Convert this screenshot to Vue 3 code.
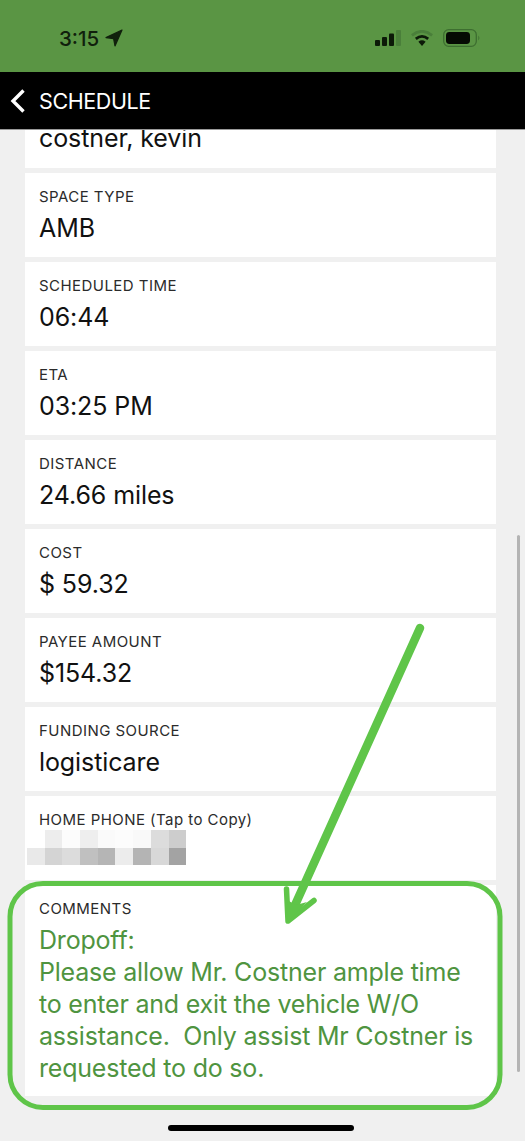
<script setup>
const fields = [
  { label: 'SPACE TYPE', value: 'AMB' },
  { label: 'SCHEDULED TIME', value: '06:44' },
  { label: 'ETA', value: '03:25 PM' },
  { label: 'DISTANCE', value: '24.66 miles' },
  { label: 'COST', value: '$ 59.32' },
  { label: 'PAYEE AMOUNT', value: '$154.32' },
  { label: 'FUNDING SOURCE', value: 'logisticare' }
]

// blurred phone number, one row of grey levels per line of the mosaic
const mosaic = [
  ['#fff', '#ededed', '#fcfcfc', '#eeeeee', '#fafafa', '#fcfcfc', '#f9f9f9', '#dcdcdc', '#cdcdcd'],
  ['#e9e9e9', '#d4d4d4', '#dcdcdc', '#c0c0c0', '#b5b5b5', '#ececec', '#b4b4b4', '#d8d8d8', '#a3a3a3']
]
</script>

<template>
  <div class="screen">
    <div class="status-bar">
      <div class="status-left">
        <span class="time">3:15</span>
        <svg class="loc" width="18" height="18" viewBox="0 0 18 18">
          <path d="M17 1 L1 8.6 L8.6 9.6 L10 17 Z" fill="#10200c" stroke="#10200c" stroke-width="1.2" stroke-linejoin="round" />
        </svg>
      </div>
      <div class="status-right">
        <svg width="26" height="16" viewBox="0 0 26 16">
          <rect x="0" y="10" width="5" height="6" rx="1" fill="#0c1a08" />
          <rect x="7" y="7" width="5" height="9" rx="1" fill="#0c1a08" />
          <rect x="14" y="3.5" width="5" height="12.5" rx="1" fill="#0c1a08" />
          <rect x="21" y="0" width="5" height="16" rx="1" fill="#4a7f3a" />
        </svg>
        <svg width="24" height="17" viewBox="0 0 22 16">
          <path d="M1.5 5 Q11 -2.5 20.5 5" fill="none" stroke="#4a7f3a" stroke-width="2.6" />
          <path d="M5.2 8.4 Q11 3.6 16.8 8.4" fill="none" stroke="#0c1a08" stroke-width="2.6" />
          <path d="M7.6 11 Q11 8.2 14.4 11 L11 15 Z" fill="#0c1a08" />
        </svg>
        <svg width="38" height="18" viewBox="0 0 38 18">
          <rect x="0.7" y="0.7" width="32.6" height="16.6" rx="5" fill="none" stroke="#3d6e30" stroke-width="1.3" />
          <rect x="3" y="3" width="24" height="12" rx="3.4" fill="#050a03" />
          <path d="M35.4 6.5 Q37.4 9 35.4 11.5 Z" fill="#3d6e30" />
        </svg>
      </div>
    </div>

    <div class="nav-bar">
      <svg width="18" height="26" viewBox="0 0 18 26">
        <path d="M14.5 2.5 L4 13 L14.5 23.5" fill="none" stroke="#fff" stroke-width="3.4" />
      </svg>
      <span class="nav-title">SCHEDULE</span>
    </div>

    <div class="content">
      <div class="list">
        <div class="card card-first">
          <div class="value">costner, kevin</div>
        </div>
        <div v-for="f in fields" :key="f.label" class="card">
          <div class="label">{{ f.label }}</div>
          <div class="value">{{ f.value }}</div>
        </div>
        <div class="card">
          <div class="label">HOME PHONE (Tap to Copy)</div>
          <div class="mosaic">
            <div v-for="(row, i) in mosaic" :key="i" class="mosaic-row">
              <span v-for="(c, j) in row" :key="j" :style="{ background: c }"></span>
            </div>
          </div>
        </div>
        <div class="card card-comments">
          <div class="label">COMMENTS</div>
          <div class="comments">Dropoff:<br />Please allow Mr. Costner ample time to enter and exit the vehicle W/O assistance.&nbsp; Only assist Mr Costner is requested to do so.</div>
        </div>
      </div>
    </div>

    <div class="scrollbar"></div>
    <div class="home-indicator"></div>

    <!-- green markup drawn over the screenshot -->
    <svg class="markup" width="525" height="1141" viewBox="0 0 525 1141">
      <rect x="10" y="883.5" width="490" height="224" rx="33" fill="none" stroke="#5fc549" stroke-width="5" />
      <path d="M420 628 L291 914" fill="none" stroke="#5fc549" stroke-width="8.5" stroke-linecap="round" />
      <path d="M286.5 889 L288 921 L314 900.5" fill="none" stroke="#5fc549" stroke-width="5.5" stroke-linecap="round" stroke-linejoin="round" />
      <path d="M288 921 L287 900 L296 905 L307 902 Z" fill="#5fc549" />
    </svg>
  </div>
</template>

<style>
body {
  background: #f0f0f0;
}
</style>

<style scoped>
.screen {
  position: relative;
  width: 525px;
  height: 1141px;
  overflow: hidden;
  background: #f0f0f0;
  font-family: Inter, "Liberation Sans", Arial, sans-serif;
  display: flex;
  flex-direction: column;
}

.status-bar {
  height: 72px;
  flex-shrink: 0;
  background: #5a9544;
  display: flex;
  align-items: center;
  justify-content: space-between;
  padding: 4px 44px 0 59px;
  box-sizing: border-box;
}

.status-left {
  display: flex;
  align-items: center;
  gap: 6px;
}

.time {
  font-size: 20.5px;
  font-weight: 500;
  color: #10200c;
}

.status-right {
  display: flex;
  align-items: center;
  gap: 9px;
}

.nav-bar {
  height: 58px;
  flex-shrink: 0;
  background: #000;
  border-bottom: 1px solid #9a9a9a;
  box-sizing: border-box;
  display: flex;
  align-items: center;
  gap: 12px;
  padding-left: 9px;
  position: relative;
  z-index: 1;
}

.nav-title {
  color: #fff;
  font-size: 21.5px;
  letter-spacing: -0.4px;
  padding-top: 1px;
}

.content {
  flex: 1;
  overflow: hidden;
}

.list {
  margin: -46px 29px 0 25px;
  display: flex;
  flex-direction: column;
  gap: 5.5px;
}

.card {
  background: #fff;
  height: 83.5px;
  padding: 15px 14px 0;
  box-sizing: border-box;
}

.card-first {
  padding-top: 39px;
}

.card-comments {
  height: 211px;
}

.label {
  font-size: 15px;
  line-height: 17px;
  color: #2b2b2b;
  letter-spacing: 0.45px;
}

.value {
  font-size: 25px;
  line-height: 30px;
  margin-top: 8px;
  color: #111;
  letter-spacing: -0.1px;
}

.card-first .value {
  margin-top: 0;
}

.mosaic {
  margin: 2px 0 0 -12px;
}

.mosaic-row {
  display: flex;
  height: 17.5px;
}

.mosaic-row span {
  width: 17.7px;
}

.comments {
  margin-top: 7px;
  font-size: 25px;
  line-height: 32px;
  color: #4f9440;
  letter-spacing: -0.2px;
}

.scrollbar {
  position: absolute;
  left: 517px;
  top: 535px;
  width: 3px;
  height: 537px;
  border-radius: 2px;
  background: #b4b4b4;
}

.home-indicator {
  position: absolute;
  left: 168px;
  top: 1125px;
  width: 186px;
  height: 6px;
  border-radius: 3px;
  background: #000;
}

.markup {
  position: absolute;
  left: 0;
  top: 0;
  pointer-events: none;
}
</style>
